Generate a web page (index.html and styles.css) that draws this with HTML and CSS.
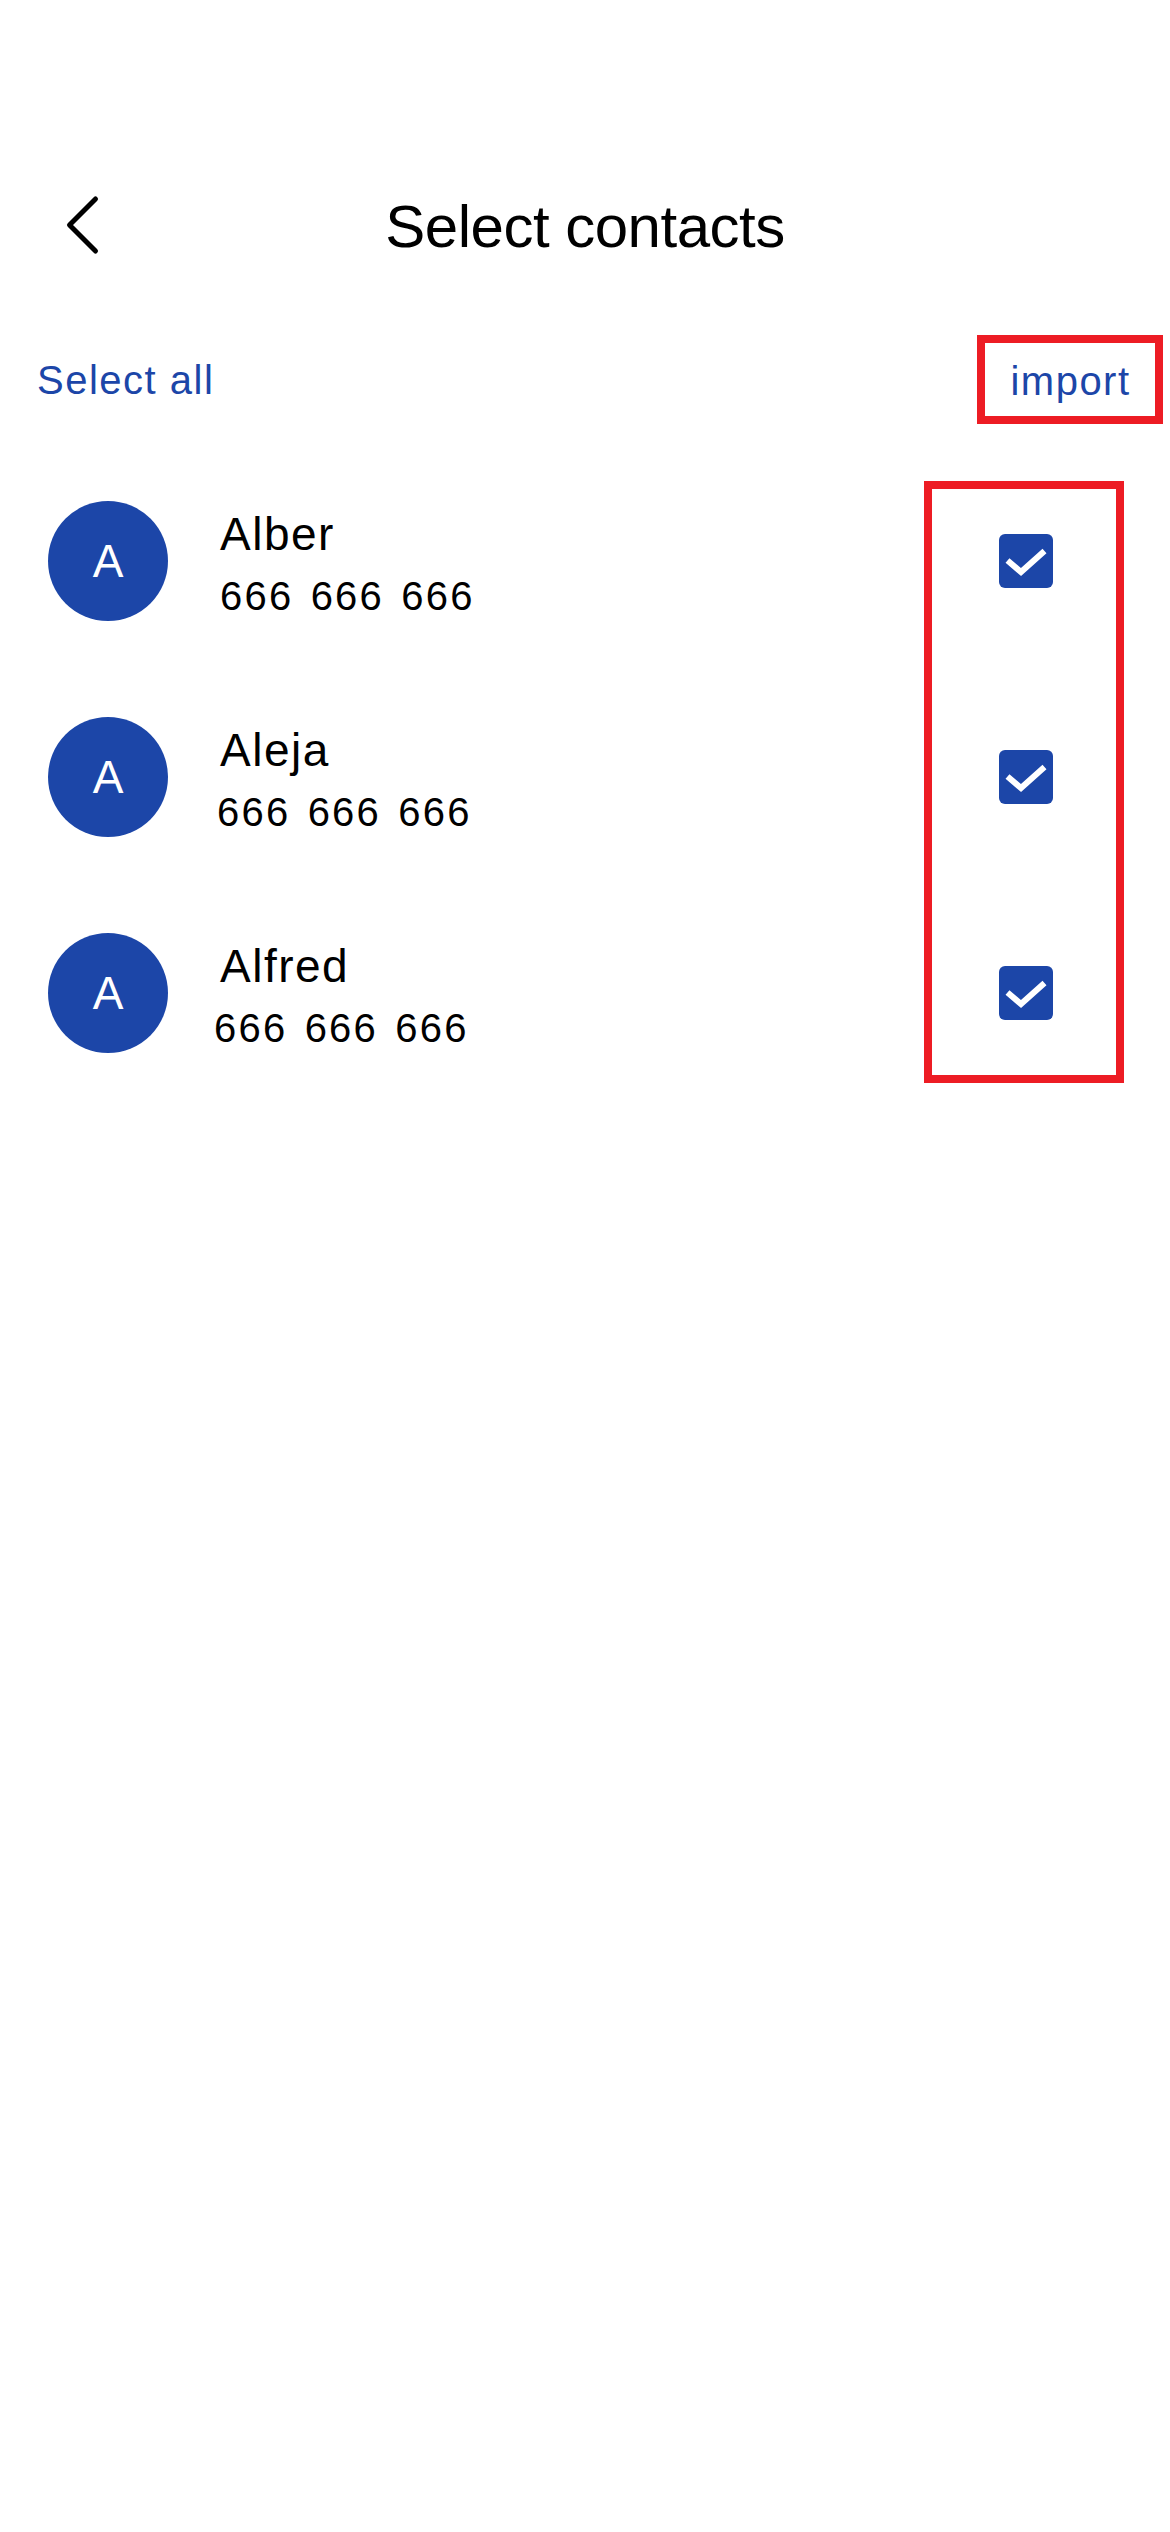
FILE: index.html
```html
<!DOCTYPE html>
<html lang="en">
<head>
    <meta charset="UTF-8">
    <meta name="viewport" content="width=device-width, initial-scale=1.0">
    <title>Select contacts</title>
    <link rel="stylesheet" href="styles.css">
</head>
<body>

    <div class="screen">
        <header class="topbar">
            <button class="back-btn" aria-label="Back">
                <svg width="40" height="66" viewBox="0 0 40 66">
                    <polyline points="33.5,7 7.5,33 33.5,59" fill="none" stroke="#000" stroke-width="5" stroke-linecap="round" stroke-linejoin="round"/>
                </svg>
            </button>
            <h1 class="title">Select contacts</h1>
            <span></span>
        </header>

        <div class="actions">
            <button class="link-btn">Select all</button>
            <button class="link-btn import-btn">import</button>
        </div>

        <div class="contact-list">
            <div class="contact">
                <div class="avatar">A</div>
                <div class="contact-info">
                    <p class="contact-name">Alber</p>
                    <p class="contact-phone">666 666 666</p>
                </div>
                <svg class="check" width="54" height="54" viewBox="0 0 54 54">
                    <rect width="54" height="54" rx="6" fill="#1c46a8"/>
                    <polyline points="8.5,26.5 22,38 45.5,17" fill="none" stroke="#fff" stroke-width="6"/>
                </svg>
            </div>
            <div class="contact">
                <div class="avatar">A</div>
                <div class="contact-info">
                    <p class="contact-name">Aleja</p>
                    <p class="contact-phone shift-1">666 666 666</p>
                </div>
                <svg class="check" width="54" height="54" viewBox="0 0 54 54">
                    <rect width="54" height="54" rx="6" fill="#1c46a8"/>
                    <polyline points="8.5,26.5 22,38 45.5,17" fill="none" stroke="#fff" stroke-width="6"/>
                </svg>
            </div>
            <div class="contact">
                <div class="avatar">A</div>
                <div class="contact-info">
                    <p class="contact-name">Alfred</p>
                    <p class="contact-phone shift-2">666 666 666</p>
                </div>
                <svg class="check" width="54" height="54" viewBox="0 0 54 54">
                    <rect width="54" height="54" rx="6" fill="#1c46a8"/>
                    <polyline points="8.5,26.5 22,38 45.5,17" fill="none" stroke="#fff" stroke-width="6"/>
                </svg>
            </div>

            <!-- highlight around the checkbox column -->
            <div class="highlight"></div>
        </div>
    </div>

</body>
</html>
```

FILE: styles.css
```css
body {
    font-family: 'Liberation Sans', Arial, sans-serif;
    background-color: #fff;
    color: #000;
    margin: 0;
    padding: 0;
}
.screen {
    width: 1170px;
    min-height: 2532px;
    background-color: #fff;
}
.topbar {
    display: grid;
    grid-template-columns: 1fr auto 1fr;
    align-items: center;
    height: 72px;
    padding-top: 191px;
}
.back-btn {
    justify-self: start;
    background: none;
    border: none;
    padding: 0 0 4px 62px;
    display: flex;
    cursor: pointer;
}
.title {
    margin: 0;
    font-size: 60px;
    line-height: 72px;
    font-weight: normal;
    letter-spacing: -0.5px;
}
.actions {
    display: flex;
    justify-content: space-between;
    align-items: center;
    margin-top: 72px;
    padding: 0 7px 0 37px;
}
.link-btn {
    background: none;
    border: none;
    padding: 0;
    font-family: inherit;
    font-size: 40px;
    line-height: 40px;
    letter-spacing: 1.5px;
    color: #1c46a8;
    cursor: pointer;
}
.import-btn {
    box-sizing: border-box;
    width: 186px;
    height: 89px;
    border: 8px solid #ed1c24;
    padding: 2px 0 0 1px;
}
.contact-list {
    position: relative;
    margin-top: 29px;
}
.contact {
    display: flex;
    align-items: center;
    height: 216px;
    box-sizing: border-box;
    padding: 0 117px 0 48px;
}
.avatar {
    width: 120px;
    height: 120px;
    border-radius: 50%;
    background-color: #1c46a8;
    color: #fff;
    font-size: 46px;
    display: flex;
    align-items: center;
    justify-content: center;
    flex-shrink: 0;
}
.contact-info {
    margin-left: 52px;
    margin-top: 3px;
}
.contact-name {
    margin: 0;
    font-size: 46px;
    line-height: 56px;
    letter-spacing: 1.5px;
}
.contact-phone {
    margin: 11px 0 0;
    font-size: 40px;
    line-height: 46px;
    letter-spacing: 2.2px;
    word-spacing: 4px;
}
.shift-1 {
    margin-left: -3px;
}
.shift-2 {
    margin-left: -6px;
}
.check {
    margin-left: auto;
    flex-shrink: 0;
}
.highlight {
    position: absolute;
    top: 28px;
    left: 924px;
    width: 200px;
    height: 602px;
    box-sizing: border-box;
    border: 8px solid #ed1c24;
}
```
